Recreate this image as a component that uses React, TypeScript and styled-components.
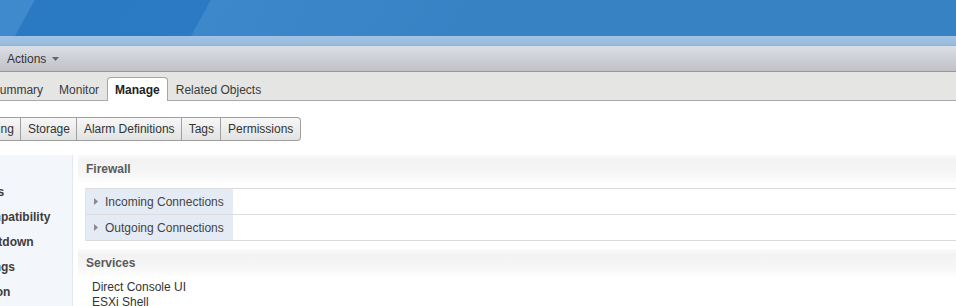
import styled, { createGlobalStyle } from "styled-components"

const GlobalStyle = createGlobalStyle`
  html, body {
    margin: 0;
    padding: 0;
    background: #fff;
  }
  body {
    font-family: "Liberation Sans", Arial, sans-serif;
    font-size: 12px;
    color: #333;
    overflow: hidden;
  }
`

const Screen = styled.div`
  width: 956px;
  height: 306px;
  overflow: hidden;
  display: flex;
  flex-direction: column;
`

const Banner = styled.div`
  height: 36px;
  flex-shrink: 0;
  background: linear-gradient(
    119deg,
    #3e8acc 0,
    #3e8acc 30px,
    #2a79c3 31px,
    #2b7ac3 184px,
    #3d88ca 185px,
    #3782c3 420px,
    #3782c3 100%
  );
`

const BannerStrip = styled.div`
  height: 9px;
  flex-shrink: 0;
  background: linear-gradient(#a2c3e3, #97bbdc);
  border-bottom: 1px solid #a3abb5;
`

const ActionsBar = styled.div`
  height: 25px;
  flex-shrink: 0;
  display: flex;
  align-items: center;
  padding-left: 7px;
  border-bottom: 1px solid #979797;
  background: linear-gradient(#dcdfe6, #c1c0c7);
`

const ActionsButton = styled.div`
  display: flex;
  align-items: center;
  gap: 6px;
  color: #333;
`

// the workspace is scrolled sideways, so its left part is out of view
const Pane = styled.div`
  flex: 1;
  display: flex;
  flex-direction: column;
  margin-left: -120px;
  min-height: 0;
`

const TabBar = styled.div`
  height: 28px;
  flex-shrink: 0;
  display: flex;
  align-items: flex-end;
  padding-left: 7px;
  background: #e5e5e4;
  border-bottom: 1px solid #a9a9a9;
`

const Tab = styled.div<{ $active?: boolean }>`
  height: 23px;
  display: flex;
  align-items: center;
  padding: 0 7px;
  margin-bottom: -1px;
  border: 1px solid ${p => (p.$active ? "#a6a6a6" : "transparent")};
  border-bottom: none;
  border-radius: 4px 4px 0 0;
  background: ${p => (p.$active ? "#fff" : "transparent")};
  font-weight: ${p => (p.$active ? "bold" : "normal")};
  color: ${p => (p.$active ? "#222" : "#3a3a3a")};
  white-space: nowrap;
`

const SubNav = styled.div`
  display: flex;
  padding: 16px 0 0 9px;
  flex-shrink: 0;
`

const SubButton = styled.div<{ $active?: boolean }>`
  height: 22px;
  display: flex;
  align-items: center;
  padding: 0 6.5px;
  border: 1px solid #9f9f9f;
  border-left: none;
  background: ${p =>
    p.$active ? "linear-gradient(#d9d9d9, #e9e9e9)" : "linear-gradient(#f7f7f7, #e2e2e2)"};
  color: #333;
  white-space: nowrap;

  &:first-child {
    border-left: 1px solid #9f9f9f;
    border-radius: 4px 0 0 4px;
  }
  &:last-child {
    border-radius: 0 4px 4px 0;
  }
`

const Body = styled.div`
  flex: 1;
  display: flex;
  margin-top: 14px;
  min-height: 0;
`

const Sidebar = styled.div`
  width: 193px;
  flex-shrink: 0;
  box-sizing: border-box;
  padding-top: 25px;
  background: #f3f6fa;
  border-right: 1px solid #e3e8ee;
`

const SideItem = styled.div`
  height: 25px;
  line-height: 25px;
  padding-left: 29px;
  font-weight: bold;
  color: #3c3c3c;
  white-space: nowrap;
`

const Main = styled.div`
  flex: 1;
  padding-left: 5px;
  min-width: 0;
`

const SectionHeader = styled.div<{ $gap?: number }>`
  height: 28px;
  display: flex;
  align-items: center;
  padding-left: 8px;
  margin-top: ${p => p.$gap ?? 0}px;
  font-weight: bold;
  color: #5b5b5b;
  background: linear-gradient(#fbfbfb 0, #f2f2f2 20%, #f6f6f6 60%, #fdfdfd 100%);
`

const ConnTable = styled.div`
  margin: 5px 0 0 7px;
  border-top: 1px solid #dcdcdc;
  border-left: 1px solid #dde3ea;
`

const ConnRow = styled.div`
  height: 25px;
  display: flex;
  border-bottom: 1px solid #dcdcdc;
`

const ConnLabel = styled.div`
  width: 147px;
  box-sizing: border-box;
  display: flex;
  align-items: center;
  gap: 7px;
  padding-left: 8px;
  background: #e4ebf4;
  color: #444;
  white-space: nowrap;
`

const ServiceList = styled.div`
  margin-top: 3px;
  padding-left: 14px;
  line-height: 15px;
  color: #333;
`

const DownCaret = () => (
  <svg width="7" height="4" viewBox="0 0 7 4">
    <path d="M0 0h7L3.5 4z" fill="#666" />
  </svg>
)

const RightCaret = () => (
  <svg width="4" height="7" viewBox="0 0 4 7">
    <path d="M0 0l4 3.5L0 7z" fill="#8a8a8a" />
  </svg>
)

const tabs = ["Getting Started", "Summary", "Monitor", "Manage", "Related Objects"]
const subTabs = ["Settings", "Networking", "Storage", "Alarm Definitions", "Tags", "Permissions"]
const sideItems = [
  "Virtual Machines",
  "Default VM Compatibility",
  "VM Startup/Shutdown",
  "Agent VM Settings",
  "Swap file location",
]
const connections = ["Incoming Connections", "Outgoing Connections"]
const services = ["Direct Console UI", "ESXi Shell", "SSH"]

export default function App() {
  return (
    <Screen>
      <GlobalStyle />
      <Banner />
      <BannerStrip />
      <ActionsBar>
        <ActionsButton>
          Actions <DownCaret />
        </ActionsButton>
      </ActionsBar>
      <Pane>
        <TabBar>
          {tabs.map(t => (
            <Tab key={t} $active={t === "Manage"}>{t}</Tab>
          ))}
        </TabBar>
        <SubNav>
          {subTabs.map(t => (
            <SubButton key={t} $active={t === "Settings"}>{t}</SubButton>
          ))}
        </SubNav>
        <Body>
          <Sidebar>
            {sideItems.map(s => (
              <SideItem key={s}>{s}</SideItem>
            ))}
          </Sidebar>
          <Main>
            <SectionHeader>Firewall</SectionHeader>
            <ConnTable>
              {connections.map(c => (
                <ConnRow key={c}>
                  <ConnLabel>
                    <RightCaret />
                    {c}
                  </ConnLabel>
                </ConnRow>
              ))}
            </ConnTable>
            <SectionHeader $gap={8}>Services</SectionHeader>
            <ServiceList>
              {services.map(s => (
                <div key={s}>{s}</div>
              ))}
            </ServiceList>
          </Main>
        </Body>
      </Pane>
    </Screen>
  )
}
